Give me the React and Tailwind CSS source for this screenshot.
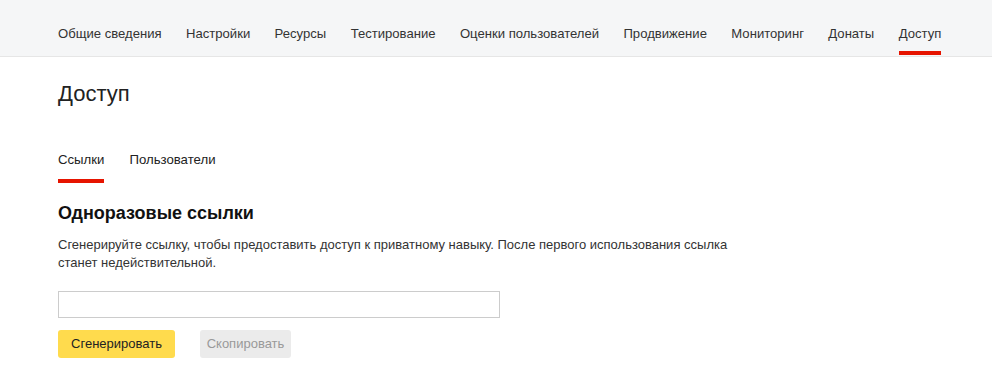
import React, { useState } from "react";

const navItems = [
  "Общие сведения",
  "Настройки",
  "Ресурсы",
  "Тестирование",
  "Оценки пользователей",
  "Продвижение",
  "Мониторинг",
  "Донаты",
  "Доступ",
];

export default function App() {
  const [tab, setTab] = useState("links");
  const [link, setLink] = useState("");

  return (
    <div className="min-h-screen bg-white text-[#222] font-['Liberation_Sans',Arial,sans-serif]">
      {/* top navigation */}
      <div className="h-[57px] bg-[#f5f6f7] border-b border-[#e6e6e6] pl-[58px]">
        <nav className="flex h-full gap-[24.4px]">
          {navItems.map((item) => {
            const active = item === "Доступ";
            return (
              <a
                key={item}
                href="#"
                className={
                  "relative flex h-full items-center whitespace-nowrap pt-[11px] text-[13.1px] text-[#333] " +
                  (active ? "after:absolute after:left-0 after:right-0 after:bottom-[1px] after:h-[4px] after:bg-[#e61400]" : "")
                }
              >
                {item}
              </a>
            );
          })}
        </nav>
      </div>

      <div className="pl-[58px]">
        <h1 className="mt-[23px] text-[22px] leading-[28px] text-[#222]">Доступ</h1>

        {/* tabs */}
        <div className="mt-[42px] flex gap-[25px] text-[13.2px]">
          <button
            onClick={() => setTab("links")}
            className={"pb-[9px] border-b-[4px] " + (tab === "links" ? "border-[#e61400]" : "border-transparent")}
          >
            Ссылки
          </button>
          <button
            onClick={() => setTab("users")}
            className={"pb-[9px] border-b-[4px] " + (tab === "users" ? "border-[#e61400]" : "border-transparent")}
          >
            Пользователи
          </button>
        </div>

        <h2 className="mt-[18px] text-[18px] leading-[24px] font-bold text-[#111]">Одноразовые ссылки</h2>
        <p className="mt-[11px] w-[680px] text-[13px] leading-[18px] text-[#333]">
          Сгенерируйте ссылку, чтобы предоставить доступ к приватному навыку. После первого использования ссылка
          станет недействительной.
        </p>

        <input
          value={link}
          readOnly
          className="mt-[19px] block h-[27px] w-[442px] border border-[#cccccc] bg-white px-2 text-[13px] outline-none"
        />

        <div className="mt-[12px] flex gap-[25px]">
          <button
            onClick={() => setLink("https://dialogs.yandex.ru/share?key=" + Math.random().toString(36).slice(2))}
            className="h-[28px] w-[117px] rounded-[3px] bg-[#ffdb4d] text-[13px] text-[#222]"
          >
            Сгенерировать
          </button>
          <button disabled className="h-[28px] w-[91px] rounded-[3px] bg-[#ebebeb] text-[13px] text-[#999]">
            Скопировать
          </button>
        </div>
      </div>
    </div>
  );
}
